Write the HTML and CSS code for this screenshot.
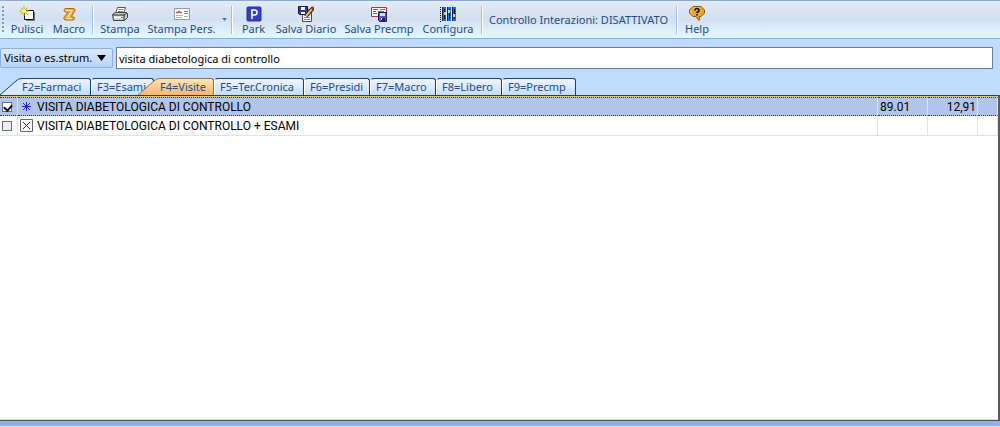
FILE: index.html
```
<!DOCTYPE html>
<html lang="it">
<head>
<meta charset="utf-8">
<title>Visite</title>
<link rel="stylesheet" href="styles.css">
</head>
<body>
<header class="toolbar">
  <span class="grip"></span>
  <button class="tool w42"><svg class="icon" viewBox="0 0 16 16"><path d="M5.500 4.500h9v9h-9z" fill="#fff" stroke="#111"/><path d="M15.500 6v8.500H7" fill="none" stroke="#777"/><path d="M5 0v10M0 5h10M1.500 1.500l7 7M8.500 1.500l-7 7" stroke="#c9b800"/><path d="M5 3v4M3 5h4" stroke="#fff36b" stroke-width="2"/></svg><span>Pulisci</span></button>
  <button class="tool w42"><svg class="icon" viewBox="0 0 16 16"><path d="M4 2.500h9q2 1 .5 3L10 11h3q1.500 1.500-.5 3H4q-2.500-1-.5-3.500L7 6H4q-2-1.500 0-3.500z" fill="#e0ac4a" stroke="#a96a18"/><path d="M4.500 4.500h7M5 12.500h6M10.500 6L7 11" fill="none" stroke="#ffe28b" stroke-width="1.500"/></svg><span>Macro</span></button>
  <span class="sep"></span>
  <button class="tool w48"><svg class="icon" viewBox="0 0 16 16"><path d="M5.500 1.500h8l-2 6h-8z" fill="#fff" stroke="#555"/><path d="M6.500 3.500h5M6 5.500h5" stroke="#888"/><path d="M.5 8.500l3-2h11l1 1v4l-3 3h-11z" fill="#c5c7ca" stroke="#444"/><path d="M1 9h11v5M12 9l3-2" fill="none" stroke="#333"/><path d="M2 11.500h9" stroke="#fff" stroke-width="2"/><path d="M9 11.500h2" stroke="#38a43b"/></svg><span>Stampa</span></button>
  <button class="tool w75"><svg class="icon" viewBox="0 0 16 16"><path d="M.5 2.500h15v11H.5z" fill="#fff" stroke="#929aa8"/><path d="M2 6.500h2l1-1 1 1h2" fill="none" stroke="#d8572d" stroke-width="1.500"/><path d="M10 5.500h4M10 7.500h4" stroke="#6481a8"/><path d="M2 9.500h7M2 11.500h6M10 10.500h4" stroke="#a9b5c9"/></svg><span>Stampa Pers.</span></button>
  <button class="more" aria-label="Altre stampe"><svg width="5" height="3" viewBox="0 0 5 3"><path d="M0 0h5L2.500 3z" fill="#4a75b5"/></svg></button>
  <span class="sep"></span>
  <button class="tool w35 park"><svg class="icon" viewBox="0 0 16 16"><rect x="1" y="1" width="14" height="14" rx="1" fill="#3440c4" stroke="#2530a0"/><path d="M6 13V4h2.500Q11 4 11 6.500T8.500 9H6" fill="none" stroke="#fff" stroke-width="1.600"/></svg><span>Park</span></button>
  <button class="tool w70"><svg class="icon" viewBox="0 0 16 16"><path d="M4.500 3.500h9v12h-9z" fill="#fff" stroke="#555"/><path d="M6 9.500h5M6 11.500h6M6 13.500h6" stroke="#88a"/><path d="M.5.500h9v8h-8l-1-1z" fill="#3438a8" stroke="#16164e"/><path d="M3 1h4v3H3zM3 6h4v2H3z" fill="#fff"/><path d="M15 2L8 10" stroke="#222" stroke-width="4"/><path d="M14 3L8 10" stroke="#f3bd42" stroke-width="2"/><path d="M14 1l2 2" stroke="#b52525" stroke-width="2"/></svg><span>Salva Diario</span></button>
  <button class="tool w76"><svg class="icon" viewBox="0 0 16 16"><path d="M.5 1.500h15v9H.5z" fill="#fff" stroke="#b43344"/><path d="M2 3.500h5M9 3.500h5M2 5.500h3M7 5.500h6M2 7.500h4" stroke="#d24655"/><path d="M7.500 6.500h8v9h-7l-1-1z" fill="#5559b7" stroke="#191b65"/><path d="M9 7h5v3H9z" fill="#d7daf5"/><path d="M10 12h4v3h-4z" fill="#20205b"/><path d="M10 12h1v2h-1z" fill="#fff"/></svg><span>Salva Precmp</span></button>
  <button class="tool w62"><svg class="icon" viewBox="0 0 16 16"><path d="M.5 1v15" stroke="#111" stroke-dasharray="1 1"/><path d="M2 1h4v14H2zM7 1h4v14H7zM12 1h4v14h-4z" fill="#1970d6"/><path d="M2.500 1v14M7.500 1v14M12.500 1v14" stroke="#092761"/><path d="M4.500 3v10M9.500 3v10M14.500 3v10" stroke="#081737"/><path d="M4 6h2v3H4zM8 4h2v3H8zM13 8h2v3h-2z" fill="#ffd43c"/></svg><span>Configura</span></button>
  <span class="sep"></span>
  <span class="status">Controllo Interazioni: DISATTIVATO</span>
  <span class="sep"></span>
  <button class="tool w34"><svg class="icon" viewBox="0 0 16 16"><path d="M4 .5h8L15.500 4v3L12 10.500h-1.500l-.5 4-3-4H4L.5 7V4z" fill="#eda720" stroke="#8c5410"/><path d="M4 2h7M2 4v3" stroke="#ffe174"/><path d="M6 4.500Q6 2.500 8 2.500t2 2q0 1-2 2v.5M8 8v1.500" fill="none" stroke="#111" stroke-width="1.600"/></svg><span>Help</span></button>
</header>
<main class="content">
  <form class="search">
    <button type="button" class="kind">Visita o es.strum.<svg width="9" height="6" viewBox="0 0 9 6"><path d="M0 0h9L4.500 6z" fill="#000"/></svg></button>
    <input class="query" type="text" aria-label="Cerca prestazione" value="visita diabetologica di controllo">
  </form>
  <nav class="tabs" role="tablist">
    <button role="tab" class="tab slanted t-farmaci"><svg class="slope" viewBox="0 0 22 17"><path d="M0 17L16 3Q18 .5 22 .5V17z" fill="#d5e6fc"/><path d="M0 17L16 3Q18 .5 22 .5" fill="none" stroke="#153f85"/></svg><span class="face">F2=Farmaci</span></button>
    <button role="tab" class="tab t-esami">F3=Esami</button>
    <button role="tab" aria-selected="true" class="tab slanted active"><svg class="slope" viewBox="0 0 22 17"><defs><linearGradient id="sel" x1="0" y1="0" x2="0" y2="1"><stop offset="0" stop-color="#ffe3bd"/><stop offset="1" stop-color="#fbb568"/></linearGradient></defs><path d="M0 17L16 3Q18 .5 22 .5V17z" fill="url(#sel)"/><path d="M0 17L16 3Q18 .5 22 .5" fill="none" stroke="#8c7358"/></svg><span class="face">F4=Visite</span></button>
    <button role="tab" class="tab t-cronica">F5=Ter.Cronica</button>
    <button role="tab" class="tab t-short">F6=Presidi</button>
    <button role="tab" class="tab t-short">F7=Macro</button>
    <button role="tab" class="tab t-short">F8=Libero</button>
    <button role="tab" class="tab t-precmp">F9=Precmp</button>
  </nav>
  <section class="panel">
    <table class="list">
      <colgroup><col class="c-check"><col><col class="c-num"><col class="c-num"><col class="c-end"></colgroup>
      <tr class="selected">
        <td><input type="checkbox" id="r1" class="check" checked></td>
        <td><label for="r1" class="name"><svg class="mark" viewBox="0 0 13 13"><path d="M6.500 2v9M2 6.500h9M3 3l7 7M10 3l-7 7" stroke="#2424cf"/></svg>VISITA DIABETOLOGICA DI CONTROLLO</label></td>
        <td>89.01</td><td class="price">12,91</td><td></td>
      </tr>
      <tr>
        <td><input type="checkbox" id="r2" class="check"></td>
        <td><label for="r2" class="name"><svg class="mark" viewBox="0 0 13 13"><path d="M.5.500h12v12H.5z" fill="#fff" stroke="#666"/><path d="M3 3l7 7M10 3l-7 7" stroke="#2424af"/></svg>VISITA DIABETOLOGICA DI CONTROLLO + ESAMI</label></td>
        <td></td><td></td><td></td>
      </tr>
    </table>
  </section>
</main>
<footer class="edge"></footer>
</body>
</html>
```
FILE: styles.css
```
* { box-sizing: border-box; }
body {
  margin: 0;
  min-height: 100vh;
  display: flex;
  flex-direction: column;
  background: #bfdbff;
  font: 11px/16px "Noto Sans", "Open Sans", sans-serif;
  color: #000;
}
button, input { font: inherit; color: inherit; }
button { margin: 0; padding: 0; border: 0; background: none; white-space: nowrap; }
.toolbar {
  display: flex;
  align-items: center;
  height: 39px;
  border-top: 1px solid #8ba8d9;
  border-bottom: 1px solid #8caed3;
  background: linear-gradient(#e2ebf7 0, #d7e2f2 35%, #d3e0f1 50%, #e0f1fb 85%, #def8ff 100%);
  color: #254a88;
}
.grip {
  width: 2px;
  height: 27px;
  margin: 0 2px;
  background: repeating-linear-gradient(#7c9cd0 0 2px, transparent 2px 4px);
}
.tool {
  display: flex;
  flex-direction: column;
  align-items: center;
  flex: none;
  padding-top: 2px;
  line-height: 14px;
}
.icon { width: 16px; height: 16px; }
.w34 { width: 34px; }
.w35 { width: 35px; }
.w42 { width: 42px; }
.w48 { width: 48px; }
.w62 { width: 62px; }
.w70 { width: 70px; }
.w75 { width: 75px; }
.w76 { width: 76px; }
.more { width: 10px; height: 28px; flex: none; }
.more svg { display: block; margin: 0 auto; }
.sep {
  flex: none;
  width: 2px;
  height: 28px;
  margin: 0 2px;
  border-left: 1px solid #9ebde8;
  border-right: 1px solid #fff;
}
.park { margin-left: 1px; }
.status { flex: none; width: 189px; padding-left: 4px; white-space: nowrap; }
.content { flex: 1; display: flex; flex-direction: column; }
.search { display: flex; gap: 3px; padding: 8px 7px 9px 0; }
.kind {
  display: flex;
  align-items: center;
  justify-content: space-between;
  width: 113px;
  height: 20px;
  margin-top: 1px;
  padding: 0 6px 0 3px;
  border: 1px solid #8fafd9;
  border-radius: 2px;
  background: linear-gradient(#d9e8fb, #b9d3f5);
}
.query {
  flex: 1;
  min-width: 0;
  height: 22px;
  padding: 0 2px;
  border: 1px solid #6d7f96;
  background: #fff;
}
.tabs { display: flex; height: 17px; color: #254a88; }
.tab {
  flex: none;
  padding: 0 5px;
  border: 1px solid #153f85;
  border-left-color: #fff;
  border-bottom: 0;
  border-radius: 4px 3px 0 0;
  background: linear-gradient(#edf5ff, #c5dcfb);
  line-height: 16px;
  text-align: left;
}
.slanted { display: flex; padding: 0; border: 0; background: none; }
.slope { width: 22px; height: 17px; }
.face {
  height: 17px;
  flex: 1;
  border-top: 1px solid #153f85;
  border-right: 1px solid #153f85;
  border-radius: 0 3px 0 0;
  background: linear-gradient(#edf5ff, #c5dcfb);
}
.t-farmaci { width: 91px; }
.t-farmaci .slope path:first-child { fill: #d9e8fd; }
.t-esami { width: 63px; }
.active { width: 76px; margin-left: -16px; z-index: 1; }
.active .face { border-color: #8c7358; background: linear-gradient(#ffe3bd, #fbb568); }
.t-cronica { width: 90px; }
.t-short { width: 66px; }
.t-precmp { width: 74px; }
.panel {
  flex: 1;
  border-top: 1px solid #233f76;
  border-right: 2px solid #5b5b5b;
  border-bottom: 1px solid #474e59;
  background: #fff;
  box-shadow: inset 0 -1px #f1e3c4;
}
.list {
  width: 100%;
  table-layout: fixed;
  border-collapse: separate;
  border-spacing: 0;
  border-top: 1px solid #e5c48c;
  font: 12px/16px Roboto, "Noto Sans", sans-serif;
}
.c-check { width: 18px; }
.c-num { width: 50px; }
.c-end { width: 20px; }
.list td {
  height: 20px;
  padding: 0 2px;
  border-right: 1px solid #e4e2de;
  border-bottom: 1px solid #e4e2de;
  white-space: nowrap;
}
.list .price { padding-right: 1px; text-align: right; }
.list .selected td {
  height: 19px;
  border-top: 1px dotted #333;
  border-bottom: 1px dotted #333;
  background: #b1c5e8;
}
.name { display: flex; align-items: center; gap: 4px; }
.mark { width: 13px; height: 13px; }
.check {
  display: block;
  appearance: none;
  width: 10px;
  height: 10px;
  margin: 0;
  border: 1px solid #5f7189;
  background: #eef1f6;
}
.check:checked {
  background: #fff;
  position: relative;
}
.check:checked::after {
  content: "";
  position: absolute;
  left: 2px;
  top: 0;
  width: 4px;
  height: 6px;
  border: solid #111;
  border-width: 0 2px 2px 0;
  transform: rotate(42deg);
}
.edge { height: 6px; background: #8db2e3; border-bottom: 1px solid #dce9f8; }
```
